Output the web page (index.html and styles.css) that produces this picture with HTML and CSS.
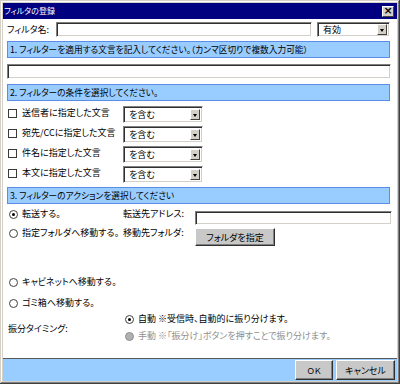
FILE: index.html
```html
<!DOCTYPE html>
<html lang="ja">
<head>
<meta charset="utf-8">
<title>フィルタの登録</title>
<link rel="stylesheet" href="styles.css">
</head>
<body>
<div class="window">
  <div class="titlebar">
    <span class="title">フィルタの登録</span>
    <span class="close">×</span>
  </div>
  <div class="content">
    <div class="name-row">
      <span class="name-label">フィルタ名:</span>
      <div class="inset name-input"></div>
      <div class="inset select status-select"><span class="sel-text">有効</span><span class="arrow"></span></div>
    </div>
    <div class="section s1">1. フィルターを適用する文言を記入してください。（カンマ区切りで複数入力可能）</div>
    <div class="inset words-input"></div>
    <div class="section s2">2. フィルターの条件を選択してください。</div>
    <div class="conds">
      <div class="cond"><span class="check-label"><span class="checkbox"></span>送信者に指定した文言</span><div class="inset select cond-select"><span class="sel-text">を含む</span><span class="arrow"></span></div></div>
      <div class="cond"><span class="check-label"><span class="checkbox"></span>宛先/CCに指定した文言</span><div class="inset select cond-select"><span class="sel-text">を含む</span><span class="arrow"></span></div></div>
      <div class="cond"><span class="check-label"><span class="checkbox"></span>件名に指定した文言</span><div class="inset select cond-select"><span class="sel-text">を含む</span><span class="arrow"></span></div></div>
      <div class="cond"><span class="check-label"><span class="checkbox"></span>本文に指定した文言</span><div class="inset select cond-select"><span class="sel-text">を含む</span><span class="arrow"></span></div></div>
    </div>
    <div class="section s3">3. フィルターのアクションを選択してください</div>
    <div class="action a1">
      <span class="radio-label"><span class="radio checked"></span>転送する。</span>
      <span class="field-label">転送先アドレス:</span>
      <div class="inset addr-input"></div>
    </div>
    <div class="action a2">
      <span class="radio-label"><span class="radio"></span>指定フォルダへ移動する。</span>
      <span class="field-label">移動先フォルダ:</span>
      <div><span class="button folder-btn">フォルダを指定</span></div>
    </div>
    <div class="action a3"><span class="radio-label"><span class="radio"></span>キャビネットへ移動する。</span></div>
    <div class="action a4"><span class="radio-label"><span class="radio"></span>ゴミ箱へ移動する。</span></div>
    <div class="timing">
      <span class="timing-label">振分タイミング:</span>
      <div class="timing-opts">
        <span class="radio-label"><span class="radio checked"></span>自動 ※受信時、自動的に振り分けます。</span>
        <span class="radio-label disabled"><span class="radio dis"></span>手動 ※「振分け」ボタンを押すことで振り分けます。</span>
      </div>
    </div>
  </div>
  <div class="footer">
    <span class="button ok-btn">ＯＫ</span>
    <span class="button cancel-btn">キャンセル</span>
  </div>
</div>
</body>
</html>
```
FILE: styles.css
```css
html, body { margin: 0; padding: 0; background: #d4d0c8; }
body {
  font-family: "Noto Sans CJK JP", "Noto Sans", sans-serif;
  font-size: 9px;
  font-feature-settings: "palt";
  color: #000;
  white-space: nowrap;
}
.window {
  width: 400px;
  height: 384px;
  box-sizing: border-box;
  padding: 3px;
  background: #d4d0c8;
  box-shadow: inset -1px -1px #404040, inset 1px 1px #d4d0c8, inset -2px -2px #808080, inset 2px 2px #ffffff;
  display: flex;
  flex-direction: column;
}
.titlebar {
  height: 16px;
  background: #000080;
  display: flex;
  align-items: center;
  justify-content: space-between;
  padding: 0 3px 0 1px;
}
.title { color: #fff; font-size: 8px; line-height: 10px; }
.close {
  width: 12px;
  height: 11px;
  box-sizing: border-box;
  background: #d4d0c8;
  border: 1px solid;
  border-color: #fff #404040 #404040 #fff;
  font-size: 11px;
  line-height: 8px;
  text-align: center;
  font-weight: bold;
  font-family: "DejaVu Sans", sans-serif;
}
.content {
  flex: 1;
  background: #fff;
  padding: 3px 6px 0 4px;
  display: flex;
  flex-direction: column;
}
.inset {
  box-sizing: border-box;
  background: #fff;
  border: 1px solid;
  border-color: #808080 #fff #fff #808080;
  box-shadow: inset 1px 1px #303030, inset -1px -1px #d4d0c8;
}
.name-row { display: flex; align-items: center; height: 15px; }
.name-label { width: 49px; line-height: 15px; font-size: 9px; }
.name-input { width: 256px; height: 15px; }
.select { display: flex; align-items: center; justify-content: space-between; padding: 0 2px 0 5px; }
.status-select { width: 73px; height: 15px; margin-left: 5px; }
.sel-text { line-height: 12px; }
.arrow {
  width: 10px;
  height: 11px;
  box-sizing: border-box;
  background: #d4d0c8;
  border: 1px solid;
  border-color: #fff #404040 #404040 #fff;
  position: relative;
}
.arrow::after {
  content: "";
  position: absolute;
  left: 1.5px;
  top: 3.5px;
  border-left: 2.5px solid transparent;
  border-right: 2.5px solid transparent;
  border-top: 3px solid #000;
}
.section {
  box-sizing: border-box;
  height: 17px;
  background: #99ccff;
  border: 1px solid #5b8de6;
  padding-left: 2px;
  line-height: 15px;
  font-size: 8.7px;
  margin-right: 1px;
}
.s1 { margin-top: 4px; }
.words-input { height: 15px; margin-top: 6px; }
.s2 { margin-top: 5px; }
.conds { display: flex; flex-direction: column; gap: 3px; margin-top: 5px; }
.cond { display: grid; grid-template-columns: 116px 80px; height: 17px; align-items: center; }
.check-label { display: flex; align-items: center; line-height: 12px; margin-top: -3px; }
.checkbox {
  width: 9px;
  height: 9px;
  box-sizing: border-box;
  border: 1px solid #3a3a3a;
  background: #fff;
  margin: 0 5px 0 1px;
}
.cond-select { height: 17px; }
.s3 { margin-top: 4px; }
.action { display: grid; grid-template-columns: 116px 72px 1fr; align-items: start; }
.radio-label { display: flex; align-items: center; line-height: 14px; }
.radio {
  width: 9px;
  height: 9px;
  box-sizing: border-box;
  border-radius: 50%;
  border: 1px solid #404040;
  background: #fff;
  margin: 0 4px 0 2px;
  position: relative;
}
.radio.checked::after {
  content: "";
  position: absolute;
  left: 2px;
  top: 2px;
  width: 3px;
  height: 3px;
  border-radius: 50%;
  background: #000;
}
.radio.dis { background: #b0b0b0; border-color: #909090; }
.field-label { line-height: 14px; }
.a1 { margin-top: 3px; height: 18px; }
.addr-input { height: 14px; margin-top: 4px; margin-right: -1px; }
.a2 { margin-top: 1px; height: 20px; }
.button {
  display: inline-flex;
  align-items: center;
  justify-content: center;
  box-sizing: border-box;
  background: #c8c8c8;
  border: 1px solid;
  border-color: #fff #303030 #303030 #fff;
  box-shadow: inset -1px -1px #808080;
}
.folder-btn { width: 80px; height: 18px; margin-top: 2px; }
.a3 { margin-top: 29px; }
.a4 { margin-top: 7px; }
.timing { display: grid; grid-template-columns: 116px 1fr; margin-top: 2px; }
.timing-label { line-height: 14px; margin-top: 10px; padding-left: 1px; }
.timing-opts { display: flex; flex-direction: column; gap: 3px; }
.timing-opts .radio { margin-left: 2px; margin-right: 4px; }
.disabled { color: #909090; }
.footer {
  height: 23px;
  box-sizing: border-box;
  background: #99ccff;
  border-top: 1px solid #5a5a5a;
  display: flex;
  justify-content: flex-end;
  align-items: flex-start;
  gap: 3px;
  padding: 1px 2px 0 0;
}
.ok-btn { width: 38px; height: 20px; font-size: 8px; }
.cancel-btn { width: 59px; height: 20px; }
```
